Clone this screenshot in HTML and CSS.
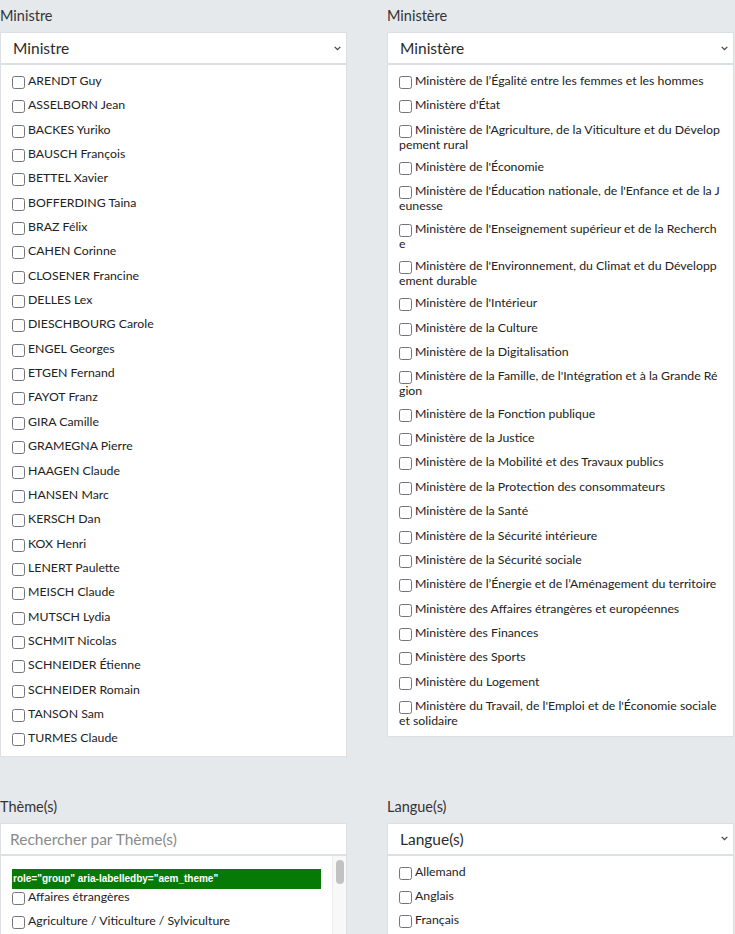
FILE: index.html
```html
<!DOCTYPE html>
<html lang="fr">
<head>
<meta charset="utf-8">
<title>Filtres</title>
<link rel="stylesheet" href="styles.css">
</head>
<body>
<div class="grid">
  <div class="field">
    <div class="label">Ministre</div>
    <div class="select"><span>Ministre</span><svg class="chev" width="7" height="5" viewBox="0 0 7 5"><polyline points="0.7,0.9 3.5,3.7 6.3,0.9" fill="none" stroke="#444" stroke-width="1.3"/></svg></div>
    <div class="list">
      <div class="opt"><span class="cb"></span>ARENDT Guy</div>
      <div class="opt"><span class="cb"></span>ASSELBORN Jean</div>
      <div class="opt"><span class="cb"></span>BACKES Yuriko</div>
      <div class="opt"><span class="cb"></span>BAUSCH François</div>
      <div class="opt"><span class="cb"></span>BETTEL Xavier</div>
      <div class="opt"><span class="cb"></span>BOFFERDING Taina</div>
      <div class="opt"><span class="cb"></span>BRAZ Félix</div>
      <div class="opt"><span class="cb"></span>CAHEN Corinne</div>
      <div class="opt"><span class="cb"></span>CLOSENER Francine</div>
      <div class="opt"><span class="cb"></span>DELLES Lex</div>
      <div class="opt"><span class="cb"></span>DIESCHBOURG Carole</div>
      <div class="opt"><span class="cb"></span>ENGEL Georges</div>
      <div class="opt"><span class="cb"></span>ETGEN Fernand</div>
      <div class="opt"><span class="cb"></span>FAYOT Franz</div>
      <div class="opt"><span class="cb"></span>GIRA Camille</div>
      <div class="opt"><span class="cb"></span>GRAMEGNA Pierre</div>
      <div class="opt"><span class="cb"></span>HAAGEN Claude</div>
      <div class="opt"><span class="cb"></span>HANSEN Marc</div>
      <div class="opt"><span class="cb"></span>KERSCH Dan</div>
      <div class="opt"><span class="cb"></span>KOX Henri</div>
      <div class="opt"><span class="cb"></span>LENERT Paulette</div>
      <div class="opt"><span class="cb"></span>MEISCH Claude</div>
      <div class="opt"><span class="cb"></span>MUTSCH Lydia</div>
      <div class="opt"><span class="cb"></span>SCHMIT Nicolas</div>
      <div class="opt"><span class="cb"></span>SCHNEIDER Étienne</div>
      <div class="opt"><span class="cb"></span>SCHNEIDER Romain</div>
      <div class="opt"><span class="cb"></span>TANSON Sam</div>
      <div class="opt"><span class="cb"></span>TURMES Claude</div>
    </div>
  </div>
  <div class="field">
    <div class="label">Ministère</div>
    <div class="select"><span>Ministère</span><svg class="chev" width="7" height="5" viewBox="0 0 7 5"><polyline points="0.7,0.9 3.5,3.7 6.3,0.9" fill="none" stroke="#444" stroke-width="1.3"/></svg></div>
    <div class="list wide">
      <div class="opt"><span class="cb"></span>Ministère de l’Égalité entre les femmes et les hommes</div>
      <div class="opt"><span class="cb"></span>Ministère d'État</div>
      <div class="opt"><span class="cb"></span>Ministère de l'Agriculture, de la Viticulture et du Dévelop<br>pement rural</div>
      <div class="opt"><span class="cb"></span>Ministère de l'Économie</div>
      <div class="opt"><span class="cb"></span>Ministère de l'Éducation nationale, de l'Enfance et de la J<br>eunesse</div>
      <div class="opt"><span class="cb"></span>Ministère de l'Enseignement supérieur et de la Recherch<br>e</div>
      <div class="opt"><span class="cb"></span>Ministère de l'Environnement, du Climat et du Développ<br>ement durable</div>
      <div class="opt"><span class="cb"></span>Ministère de l'Intérieur</div>
      <div class="opt"><span class="cb"></span>Ministère de la Culture</div>
      <div class="opt"><span class="cb"></span>Ministère de la Digitalisation</div>
      <div class="opt"><span class="cb"></span>Ministère de la Famille, de l'Intégration et à la Grande Ré<br>gion</div>
      <div class="opt"><span class="cb"></span>Ministère de la Fonction publique</div>
      <div class="opt"><span class="cb"></span>Ministère de la Justice</div>
      <div class="opt"><span class="cb"></span>Ministère de la Mobilité et des Travaux publics</div>
      <div class="opt"><span class="cb"></span>Ministère de la Protection des consommateurs</div>
      <div class="opt"><span class="cb"></span>Ministère de la Santé</div>
      <div class="opt"><span class="cb"></span>Ministère de la Sécurité intérieure</div>
      <div class="opt"><span class="cb"></span>Ministère de la Sécurité sociale</div>
      <div class="opt"><span class="cb"></span>Ministère de l’Énergie et de l’Aménagement du territoire</div>
      <div class="opt"><span class="cb"></span>Ministère des Affaires étrangères et européennes</div>
      <div class="opt"><span class="cb"></span>Ministère des Finances</div>
      <div class="opt"><span class="cb"></span>Ministère des Sports</div>
      <div class="opt"><span class="cb"></span>Ministère du Logement</div>
      <div class="opt"><span class="cb"></span>Ministère du Travail, de l'Emploi et de l'Économie sociale<br>et solidaire</div>
    </div>
  </div>
  <div class="field">
    <div class="label">Thème(s)</div>
    <div class="select search"><span>Rechercher par Thème(s)</span></div>
    <div class="list scrolled">
      <div class="scroll-content">
        <div class="aria">role="group" aria-labelledby="aem_theme"</div>
        <div class="opt"><span class="cb"></span>Affaires étrangères</div>
        <div class="opt"><span class="cb"></span>Agriculture / Viticulture / Sylviculture</div>
      </div>
      <div class="track"><div class="thumb"></div></div>
    </div>
  </div>
  <div class="field">
    <div class="label">Langue(s)</div>
    <div class="select"><span>Langue(s)</span><svg class="chev" width="7" height="5" viewBox="0 0 7 5"><polyline points="0.7,0.9 3.5,3.7 6.3,0.9" fill="none" stroke="#444" stroke-width="1.3"/></svg></div>
    <div class="list">
      <div class="opt"><span class="cb"></span>Allemand</div>
      <div class="opt"><span class="cb"></span>Anglais</div>
      <div class="opt"><span class="cb"></span>Français</div>
    </div>
  </div>
</div>
</body>
</html>
```
FILE: styles.css
```css
html, body {
  margin: 0;
  padding: 0;
}
body {
  background: #e6e9ec;
  font-family: Lato, "Noto Sans", sans-serif;
  color: #333;
  overflow: hidden;
}
.grid {
  display: grid;
  grid-template-columns: 347px 347px;
  column-gap: 40px;
  row-gap: 34px;
  align-items: start;
}
.label {
  font-size: 14.5px;
  line-height: 20px;
  padding-top: 6px;
  margin-bottom: 6px;
  color: #333;
}
.select {
  height: 32px;
  box-sizing: border-box;
  border: 1px solid #dcdfe3;
  background: #fff;
  display: flex;
  align-items: center;
  justify-content: space-between;
  padding: 0 5px 0 12px;
  font-size: 15.5px;
  color: #2b2b2b;
}
.select.search {
  padding-left: 9px;
  color: #8a8a8a;
}
.chev {
  display: block;
}
.list {
  background: #fff;
  border: 1px solid #dcdfe3;
  padding: 9px 11px 0;
}
.list.wide {
  padding-right: 4px;
}
.opt {
  font-size: 12.3px;
  line-height: 13px;
  margin-bottom: 9.35px;
  word-break: break-all;
  color: #222;
}
.cb {
  display: inline-block;
  width: 13px;
  height: 13px;
  box-sizing: border-box;
  border: 1.5px solid #74747c;
  border-radius: 2.5px;
  background: #fff;
  vertical-align: -4px;
  margin-right: 3px;
}
.list.scrolled {
  display: flex;
  padding: 0;
  height: 200px;
}
.scroll-content {
  flex: 1;
  padding: 13px 11px 0;
}
.aria {
  background: #067a06;
  color: #fff;
  font-family: "Liberation Sans", Arial, sans-serif;
  font-weight: bold;
  font-size: 10px;
  line-height: 20px;
  height: 20px;
  padding-left: 1px;
  white-space: nowrap;
  overflow: hidden;
}
.aria + .opt {
  margin-top: 1px;
}
.track {
  width: 14px;
  background: #f8f8f8;
  border-left: 1px solid #ececec;
  padding: 4px 2px 0 3px;
  box-sizing: border-box;
}
.thumb {
  width: 8px;
  height: 24px;
  border-radius: 4px;
  background: #c2c2c2;
}
```
